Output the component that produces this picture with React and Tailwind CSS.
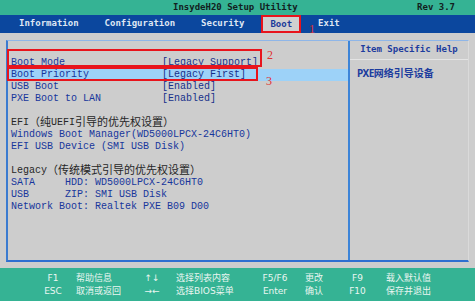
import React from 'react';

// Rows of the boot menu, left pane
const ROWS = [
  { label: 'Boot Mode', value: '[Legacy Support]' },
  { label: 'Boot Priority', value: '[Legacy First]', active: true },
  { label: 'USB Boot', value: '[Enabled]' },
  { label: 'PXE Boot to LAN', value: '[Enabled]' },
  { gap: true },
  { head: 'EFI（纯UEFI引导的优先权设置）' },
  { label: 'Windows Boot Manager(WD5000LPCX-24C6HT0)' },
  { label: 'EFI USB Device (SMI USB Disk)' },
  { gap: true },
  { head: 'Legacy（传统模式引导的优先权设置）' },
  { label: 'SATA     HDD: WD5000LPCX-24C6HT0' },
  { label: 'USB      ZIP: SMI USB Disk' },
  { label: 'Network Boot: Realtek PXE B09 D00' },
];

const TABS = ['Information', 'Configuration', 'Security', 'Boot', 'Exit'];

const KEYS = [
  ['F1', '帮助信息', '↑↓', '选择列表内容', 'F5/F6', '更改', 'F9', '载入默认值'],
  ['ESC', '取消或返回', '→←', '选择BIOS菜单', 'Enter', '确认', 'F10', '保存并退出'],
];

const mono = { fontFamily: '"Liberation Mono", "Noto Sans CJK SC", monospace' };
const dv = { fontFamily: '"DejaVu Sans Mono", "Noto Sans CJK SC", monospace' };
const serif = { fontFamily: '"Liberation Serif", serif' };
const cjk = /[\u3000-\u9fff\uff00-\uffef]/;

// CJK runs get a slightly larger size, as in the BIOS font
const Text = ({ s }) => (
  <>
    {s.split(/([\u3000-\u9fff\uff00-\uffef]+)/).map((part, i) =>
      cjk.test(part) ? (
        <span key={i} className="text-[11px]">{part}</span>
      ) : (
        <span key={i}>{part}</span>
      )
    )}
  </>
);

export default function App() {
  return (
    <div className="relative w-[475px] h-[301px] overflow-hidden bg-[#cdcdcd] flex flex-col">
      {/* title */}
      <div className="h-[15px] bg-[#35b394] flex items-center text-[9px] font-bold text-[#122020]" style={dv}>
        <div className="flex-1 pl-[173px]">InsydeH20 Setup Utility</div>
        <div className="pr-[20px]">Rev 3.7</div>
      </div>

      {/* tabs */}
      <div className="h-[18px] bg-[#0b479e] flex items-stretch pl-[11px] gap-[10px] text-[9px] font-bold" style={dv}>
        {TABS.map((t) => (
          <div
            key={t}
            className={`px-[8px] flex items-center ${t === 'Boot' ? 'bg-[#d0d0d0] text-[#1a3a9a] mt-[1px]' : 'text-[#dfe6f3]'}`}
          >
            {t}
          </div>
        ))}
      </div>

      {/* main panel */}
      <div className="flex-1 px-[6px] pt-[7px] pb-[6px]">
        <div className="h-full flex border-l-2 border-l-[#3b7bd0] border-t border-t-[#8fb6e8] border-b-2 border-b-[#2f6fd0] border-r border-r-[#dadada]">
          <div className="w-[340px] pt-[16px] text-[10px] leading-[12px]" style={mono}>
            {ROWS.map((r, i) => {
              if (r.gap) return <div key={i} className="h-[12px]" />;
              if (r.head)
                return (
                  <div key={i} className="h-[12px] pl-[3px] text-[#262626] whitespace-pre flex items-center">
                    <Text s={r.head} />
                  </div>
                );
              return (
                <div
                  key={i}
                  className={`h-[12px] pl-[3px] flex items-center whitespace-pre text-[#17369c] ${r.active ? 'bg-[#9dd2f8]' : ''}`}
                >
                  <span className="w-[151px] shrink-0">{r.label}</span>
                  {r.value && <span className="text-[#16308a]">{r.value}</span>}
                </div>
              );
            })}
          </div>
          <div className="w-[2px] bg-[#3c84d8]" />
          <div className="flex-1 flex flex-col">
            <div className="h-[19px] flex items-center justify-center text-[9px] font-bold text-[#1c3c9e] border-b border-b-[#e4e4e4]" style={dv}>
              Item Specific Help
            </div>
            <div className="pl-[7px] pt-[7px] text-[10px] leading-[12px] font-bold text-[#1c3c9e]" style={{ fontFamily: '"Noto Sans", "Noto Sans CJK SC", sans-serif' }}>
              <span className="tracking-[-0.5px]">PXE</span>网络引导设备
            </div>
          </div>
        </div>
      </div>

      {/* footer */}
      <div className="h-[33px] bg-[#35b394] pl-[36px] pt-[4px] text-[9px] leading-[13px] text-[#eaf6f1]" style={{ fontFamily: '"DejaVu Sans", "Noto Sans CJK SC", sans-serif' }}>
        {KEYS.map((row, i) => (
          <div key={i} className="grid grid-cols-[34px_70px_24px_86px_50px_40px_35px_1fr] h-[13px] items-center">
            <div className="text-center">{row[0]}</div>
            <div className="pl-[6px]">{row[1]}</div>
            <div className="text-center">{row[2]}</div>
            <div className="pl-[12px]">{row[3]}</div>
            <div className="text-center">{row[4]}</div>
            <div className="pl-[5px]">{row[5]}</div>
            <div className="text-center">{row[6]}</div>
            <div className="pl-[11px]">{row[7]}</div>
          </div>
        ))}
      </div>

      {/* red annotations */}
      <div className="absolute left-[261px] top-[15px] w-[40px] h-[18px] border-2 border-[#e8141c]" />
      <div className="absolute left-[309px] top-[23px] text-[12px] leading-[12px] text-[#e03030]" style={serif}>1</div>
      <div className="absolute left-[7px] top-[49px] w-[255px] h-[18px] border-2 border-[#e8141c]" />
      <div className="absolute left-[267px] top-[49px] text-[12px] leading-[12px] text-[#e03030]" style={serif}>2</div>
      <div className="absolute left-[7px] top-[67px] w-[251px] h-[14px] border-2 border-[#e8141c]" />
      <div className="absolute left-[266px] top-[75px] text-[12px] leading-[12px] text-[#e03030]" style={serif}>3</div>
    </div>
  );
}
